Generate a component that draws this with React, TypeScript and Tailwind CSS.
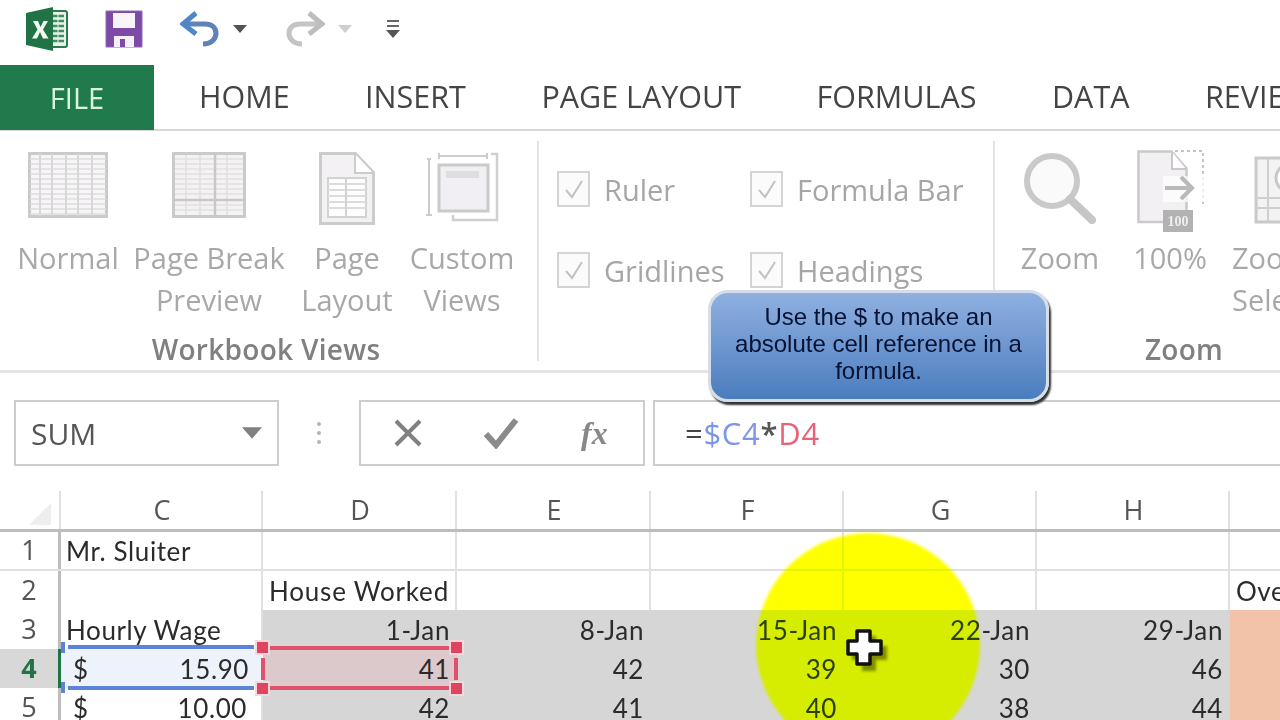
import React from "react";

const ui = "font-['Open_Sans',sans-serif]";
const cellFont = "font-['Lato',sans-serif]";

function ExcelLogo() {
  return (
    <svg width="44" height="44" viewBox="0 0 44 44">
      <rect x="24" y="4" width="18" height="36" rx="2" fill="#e8f2ea" stroke="#2a7a4c" strokeWidth="2" />
      {[9, 14, 19, 24, 29, 34].map((y) => (
        <path key={y} d={`M27 ${y}h12`} stroke="#3f8c60" strokeWidth="2.5" />
      ))}
      <path d="M33 6v32" stroke="#e8f2ea" strokeWidth="1" />
      <path d="M0 6 27 0v44L0 38z" fill="#217346" transform="translate(1 0)" />
      <path d="M8 14h5l2.500 6 3-6h4.500l-5 8.500 5.500 9H18l-3-6.500-3 6.500H7l5.500-9z" fill="#f1f8f3" />
    </svg>
  );
}

function SaveIcon() {
  return (
    <svg width="38" height="38" viewBox="0 0 38 38">
      <path d="M1 1h36v36H1z" fill="#7d4aa6" stroke="#8f68b7" />
      <rect x="8" y="3" width="22" height="15" fill="#f7f4fa" />
      <rect x="9" y="26" width="20" height="11" fill="#f4eff8" />
      <rect x="15" y="29" width="5" height="8" fill="#7d4aa6" />
    </svg>
  );
}

function UndoIcon({ color, arrow }: { color: string; arrow: string }) {
  return (
    <svg width="40" height="36" viewBox="0 0 40 36">
      <path d="M5 13h20c7 0 11 4 11 9.500S31 33 23 33" fill="none" stroke={color} strokeWidth="5" />
      <path d="M16 2 3 13l13 10" fill="none" stroke={arrow} strokeWidth="5" />
    </svg>
  );
}

function Caret({ color = "#555", w = 14, h = 8 }: { color?: string; w?: number; h?: number }) {
  return (
    <svg width={w} height={h} viewBox="0 0 14 8" className="shrink-0">
      <path d="M0 0h14L7 8z" fill={color} />
    </svg>
  );
}

function NormalIcon() {
  const xs = [12, 24, 38, 50, 64];
  const ys = [5, 10, 15, 20, 25, 30, 35, 40, 45, 50, 55, 60];
  return (
    <svg width="80" height="66" viewBox="0 0 80 66">
      <rect x="1.500" y="1.500" width="77" height="63" fill="#f7f5f7" stroke="#cacaca" strokeWidth="3" />
      {ys.map((y) => (
        <path key={y} d={`M2 ${y + 2}h76`} stroke="#dcdcdc" strokeWidth="1.500" />
      ))}
      {xs.map((x) => (
        <path key={x} d={`M${x} 2v62`} stroke="#d8d8d8" strokeWidth="2" />
      ))}
    </svg>
  );
}

function BreakIcon() {
  const ys = [7, 12, 17, 22, 27, 32, 37, 42, 53, 58];
  return (
    <svg width="74" height="66" viewBox="0 0 74 66">
      <rect x="1.500" y="1.500" width="71" height="63" fill="#f5f2f4" stroke="#cacaca" strokeWidth="3" />
      {ys.map((y) => (
        <path key={y} d={`M3 ${y}h68`} stroke="#e2dfe2" strokeWidth="1.500" />
      ))}
      {[14, 28, 55].map((x) => (
        <path key={x} d={`M${x} 3v60`} stroke="#e0e0e0" strokeWidth="1.500" />
      ))}
      <path d="M43 2v62M2 48h70" stroke="#c8c8c8" strokeWidth="2.500" />
    </svg>
  );
}

function PageIcon() {
  return (
    <svg width="56" height="74" viewBox="0 0 56 74">
      <path d="M1.500 1.500h35l18 19v51h-53z" fill="#f3f1f3" stroke="#cccccc" strokeWidth="3" />
      <path d="M36 2v19h18" fill="#fff" stroke="#cccccc" strokeWidth="2" />
      <rect x="9" y="26" width="38" height="39" fill="#fdfdfd" stroke="#d2d2d2" strokeWidth="2" />
      {[32, 38, 44, 50, 56].map((y) => (
        <path key={y} d={`M9 ${y}h38`} stroke="#dcdcdc" strokeWidth="2" />
      ))}
      <path d="M27 26v39" stroke="#d2d2d2" strokeWidth="2" />
    </svg>
  );
}

function CustomIcon() {
  return (
    <svg width="74" height="70" viewBox="0 0 74 70">
      <path d="M14 4h48M14 1v6M62 1v6" stroke="#cccccc" strokeWidth="2" fill="none" />
      <path d="M2 12h4M4 12v56M1 68h6" stroke="#cccccc" strokeWidth="2" fill="none" transform="translate(0 -5)" />
      <path d="M66 2h6v66H28v-5" stroke="#d0d0d0" strokeWidth="2.500" fill="none" />
      <rect x="14" y="13" width="49" height="46" fill="#f1eff4" stroke="#cacaca" strokeWidth="3" />
      <rect x="21" y="19" width="33" height="7" fill="#dedede" />
    </svg>
  );
}

function ZoomGlass() {
  return (
    <svg width="74" height="72" viewBox="0 0 74 72">
      <circle cx="29" cy="29" r="25" fill="#fafafa" stroke="#c9c9c9" strokeWidth="6" />
      <path d="M47 47 69 68" stroke="#c6c6c6" strokeWidth="8" strokeLinecap="round" />
    </svg>
  );
}

function HundredIcon() {
  return (
    <svg className="ml-[4px] -mt-[2px]" width="70" height="82" viewBox="0 0 70 82">
      <path d="M1.500 1.500h33l15 17V72h-48z" fill="#f2f0f3" stroke="#c9c9c9" strokeWidth="2.500" />
      <path d="M35 2v17h14" fill="#fff" stroke="#c9c9c9" strokeWidth="2" />
      <path d="M38 1h28v56" fill="none" stroke="#c4c4c4" strokeWidth="2" strokeDasharray="3 3" />
      <rect x="26" y="26" width="42" height="26" fill="#fff" opacity=".7" />
      <path d="M28 38h26M44 27l11 11-11 11" fill="none" stroke="#b9b9b9" strokeWidth="4" />
      <rect x="26" y="60" width="30" height="22" fill="#b2b2b2" />
      <text x="41" y="76" fontSize="14" fontWeight="700" textAnchor="middle" fill="#eee" fontFamily="Liberation Serif, serif">100</text>
    </svg>
  );
}

function SelectionIcon() {
  return (
    <svg width="40" height="72" viewBox="0 0 40 72">
      <rect x="2" y="6" width="38" height="64" fill="#f3f3f3" stroke="#c9c9c9" strokeWidth="3" />
      <path d="M2 46h38M2 56h38M14 6v64" stroke="#cfcfcf" strokeWidth="2" />
      <circle cx="36" cy="26" r="14" fill="#fff" stroke="#c9c9c9" strokeWidth="3" />
    </svg>
  );
}

function RibbonButton({ w, icon, lines }: { w: string; icon: React.ReactNode; lines: string[] }) {
  return (
    <div className={`${w} flex flex-col items-center shrink-0`}>
      <div className="h-[85px] flex items-start justify-center">{icon}</div>
      {lines.map((l) => (
        <div key={l} className="h-[42px] leading-[42px] text-[29px] text-[#a8a8a8] whitespace-nowrap">
          {l}
        </div>
      ))}
    </div>
  );
}

function Check({ label, w }: { label: string; w: string }) {
  return (
    <div className={`${w} flex items-center gap-[14px] h-[38px] shrink-0`}>
      <div className="w-[33px] h-[36px] border-2 border-[#d4d4d4] bg-[#fbfbfb] flex items-center justify-center shrink-0">
        <svg width="22" height="22" viewBox="0 0 22 22">
          <path d="M3 12l6 7L19 3" fill="none" stroke="#c2c2c2" strokeWidth="2" />
        </svg>
      </div>
      <span className="text-[29px] leading-none text-[#a6a6a6] whitespace-nowrap">{label}</span>
    </div>
  );
}

const columns = [
  { k: "C", w: "w-[202px]" },
  { k: "D", w: "w-[194px]" },
  { k: "E", w: "w-[194px]" },
  { k: "F", w: "w-[193px]" },
  { k: "G", w: "w-[193px]" },
  { k: "H", w: "w-[193px]" },
  { k: "I", w: "w-[60px]" },
];

function Cell({ w, children, right, bg = "", extra = "" }: { w: string; children?: React.ReactNode; right?: boolean; bg?: string; extra?: string }) {
  return (
    <div
      className={`${w} ${bg} ${extra} shrink-0 h-full relative flex items-center px-[6px] pt-[2px] text-[26px] text-[#2b2b2b] whitespace-nowrap ${cellFont} tracking-[0.6px] ${right ? "justify-end" : ""}`}
    >
      {children}
    </div>
  );
}

function RowHead({ n, active }: { n: number; active?: boolean }) {
  return (
    <div
      className={`w-[61px] shrink-0 h-full flex items-center justify-center text-[27px] ${ui} border-r-[3px] ${
        active ? "bg-[#d8d8d8] text-[#217346] font-bold border-[#217346]" : "text-[#555] border-[#bdbdbd]"
      }`}
    >
      <span className="pl-[3px] pr-[3px]">{n}</span>
    </div>
  );
}

function Row({ n, active, cells, plain }: { n: number; active?: boolean; cells: React.ReactNode; plain?: boolean }) {
  return (
    <div className={`flex h-[39px] ${plain ? "border-b-2 border-[#e0e0e0]" : ""}`}>
      <RowHead n={n} active={active} />
      {cells}
    </div>
  );
}

const grayBg = "bg-[#d6d6d6]";
const orange = "bg-[#f2c3a8]";
const vline = "border-r-2 border-[#e0e0e0]";

function Handle({ cls }: { cls: string }) {
  return <span className={`absolute w-[15px] h-[15px] bg-[#e0455f] border-2 border-[#f8d8dc] ${cls}`} />;
}

export default function App() {
  return (
    <div className={`relative w-[1280px] h-[720px] overflow-hidden bg-white ${ui} blur-[0.7px]`}>
      {/* Quick access toolbar */}
      <div className="h-[65px] flex items-center pl-[25px] pb-[7px]">
        <div className="w-[80px] shrink-0"><ExcelLogo /></div>
        <SaveIcon />
        <div className="ml-[37px] flex items-center">
          <UndoIcon color="#5f83b8" arrow="#4f86c6" />
          <div className="ml-[13px]"><Caret /></div>
        </div>
        <div className="ml-[38px] flex items-center">
          <div className="-scale-x-100"><UndoIcon color="#c4c4c4" arrow="#bdbdbd" /></div>
          <div className="ml-[13px]"><Caret color="#cfcfcf" /></div>
        </div>
        <div className="ml-[34px] flex flex-col items-center gap-[3px] w-[14px]">
          <div className="w-[12px] h-[2px] bg-[#666]" />
          <div className="w-[12px] h-[2px] bg-[#666]" />
          <Caret color="#555" w={14} h={8} />
        </div>
      </div>

      {/* Tabs */}
      <div className="h-[66px] flex items-stretch border-b-2 border-[#d8d8d8] text-[30.500px] text-[#444] whitespace-nowrap">
        <div className="w-[154px] h-[65px] bg-[#217a4b] text-[#d8f5dc] flex items-center justify-center shrink-0 text-[29px]">FILE</div>
        <div className="flex items-center pl-[45px] gap-[75.500px]">
          <span>HOME</span>
          <span>INSERT</span>
          <span>PAGE LAYOUT</span>
          <span>FORMULAS</span>
          <span>DATA</span>
          <span>REVIEW</span>
        </div>
      </div>

      {/* Ribbon */}
      <div className="h-[242px] flex border-b-[3px] border-[#e4e4e4] overflow-hidden">
        <div className="w-[537px] shrink-0 flex flex-col pt-[21px] pl-[8px]">
          <div className="flex h-[183px]">
            <RibbonButton w="w-[120px]" icon={<NormalIcon />} lines={["Normal"]} />
            <RibbonButton w="w-[162px]" icon={<BreakIcon />} lines={["Page Break", "Preview"]} />
            <RibbonButton w="w-[114px]" icon={<PageIcon />} lines={["Page", "Layout"]} />
            <RibbonButton w="w-[116px]" icon={<CustomIcon />} lines={["Custom", "Views"]} />
          </div>
          <div className="w-[516px] text-center text-[28px] tracking-[0.3px] font-semibold text-[#808080] leading-none">Workbook Views</div>
        </div>
        <div className="w-[2px] h-[220px] mt-[10px] bg-[#e4e4e4] shrink-0" />
        <div className="w-[454px] shrink-0 pl-[18px] pt-[39px] flex flex-col gap-[43px]">
          <div className="flex">
            <Check label="Ruler" w="w-[193px]" />
            <Check label="Formula Bar" w="w-[240px]" />
          </div>
          <div className="flex">
            <Check label="Gridlines" w="w-[193px]" />
            <Check label="Headings" w="w-[240px]" />
          </div>
        </div>
        <div className="w-[2px] h-[220px] mt-[10px] bg-[#e4e4e4] shrink-0" />
        <div className="flex-1 flex flex-col pt-[21px] pl-[15px] overflow-hidden">
          <div className="flex h-[183px]">
            <RibbonButton w="w-[100px]" icon={<ZoomGlass />} lines={["Zoom"]} />
            <RibbonButton w="w-[120px]" icon={<HundredIcon />} lines={["100%"]} />
            <div className="pl-[2px] flex flex-col whitespace-nowrap">
              <div className="h-[85px] pl-[22px]"><SelectionIcon /></div>
              <div className="h-[42px] leading-[42px] text-[29px] text-[#a8a8a8]">Zoom to</div>
              <div className="h-[42px] leading-[42px] text-[29px] text-[#a8a8a8]">Selection</div>
            </div>
          </div>
          <div className="w-[348px] text-center text-[28px] tracking-[0.3px] font-semibold text-[#808080] leading-none">Zoom</div>
        </div>
      </div>

      {/* Formula bar */}
      <div className="h-[118px] pt-[27px] flex pl-[14px] items-start">
        <div className="w-[265px] h-[66px] border-2 border-[#cdcdcd] flex items-center justify-between pl-[15px] pr-[15px] text-[30px] text-[#555] shrink-0">
          <span>SUM</span>
          <Caret color="#808080" w={20} h={12} />
        </div>
        <div className="w-[80px] h-[66px] flex flex-col items-center justify-center gap-[5px] shrink-0">
          {[0, 1, 2].map((i) => (
            <span key={i} className="w-[4px] h-[4px] rounded-full bg-[#b4b4b4]" />
          ))}
        </div>
        <div className="w-[286px] h-[66px] border-2 border-[#cdcdcd] flex items-center pl-[32px] shrink-0">
          <svg width="30" height="28" viewBox="0 0 30 28"><path d="M3 2l24 24M27 2 3 26" stroke="#808080" strokeWidth="4" /></svg>
          <svg className="ml-[60px]" width="36" height="32" viewBox="0 0 36 32"><path d="M3 17l10 11L33 3" fill="none" stroke="#8a8a8a" strokeWidth="6" /></svg>
          <span className="ml-[62px] font-['Liberation_Serif',serif] italic font-bold text-[32px] text-[#888] leading-none">fx</span>
        </div>
        <div className="ml-[8px] flex-1 h-[66px] border-2 border-r-0 border-[#cdcdcd] flex items-center pl-[30px] text-[31px] tracking-[0.7px] whitespace-nowrap">
          <span className="text-[#444]">=</span>
          <span className="text-[#7d97e6]">$C4</span>
          <span className="text-[#555] font-semibold">*</span>
          <span className="text-[#e8627a]">D4</span>
        </div>
      </div>

      {/* Column headers */}
      <div className="flex h-[41px] border-b-[3px] border-[#bdbdbd] text-[27px] text-[#555]">
        <div className="w-[61px] shrink-0 relative border-r-2 border-[#e0e0e0] flex items-end justify-end pr-[8px] pb-[4px]">
          <svg width="22" height="22" viewBox="0 0 22 22"><path d="M22 0v22H0z" fill="#eeeeee" /></svg>
        </div>
        {columns.map((c) => (
          <div key={c.k} className={`${c.w} shrink-0 flex items-center justify-center pl-[2px] ${vline}`}>
            {c.k === "I" ? "" : c.k}
          </div>
        ))}
      </div>

      {/* Rows */}
      <div className="flex flex-col">
        <Row
          n={1}
          plain
          cells={
            <>
              <Cell w="w-[202px]" extra={vline}><span className="-ml-[1px]">Mr. Sluiter</span></Cell>
              {columns.slice(1).map((c) => <Cell key={c.k} w={c.w} extra={vline} />)}
            </>
          }
        />
        <Row
          n={2}
          cells={
            <>
              <Cell w="w-[202px]" extra={vline} />
              <Cell w="w-[194px]" extra={vline}><span className="tracking-[0.8px]">House Worked</span></Cell>
              {columns.slice(2, 6).map((c) => <Cell key={c.k} w={c.w} extra={vline} />)}
              <Cell w="w-[60px]">Overtime</Cell>
            </>
          }
        />
        <Row
          n={3}
          cells={
            <>
              <Cell w="w-[202px]" extra={vline}><span className="-ml-[1px]">Hourly Wage</span></Cell>
              <Cell w="w-[194px]" bg={grayBg} extra="!pr-[7px]" right>1-Jan</Cell>
              <Cell w="w-[194px]" bg={grayBg} extra="!pr-[7px]" right>8-Jan</Cell>
              <Cell w="w-[193px]" bg={grayBg} extra="!pr-[7px]" right>15-Jan</Cell>
              <Cell w="w-[193px]" bg={grayBg} extra="!pr-[7px]" right>22-Jan</Cell>
              <Cell w="w-[193px]" bg={grayBg} extra="!pr-[7px]" right>29-Jan</Cell>
              <Cell w="w-[60px]" bg={orange} />
            </>
          }
        />
        <Row
          n={4}
          active
          cells={
            <>
              <Cell w="w-[202px]" bg="bg-[#eef2fb]" extra="justify-between !pl-[12px] !pr-[14px]">
                <span>$</span><span>15.90</span>
                <span className="absolute left-[7px] right-[9px] top-[-4px] h-[4px] bg-[#5b83d8]" />
                <span className="absolute left-[7px] right-[9px] bottom-[-2px] h-[4px] bg-[#5b83d8]" />
                <span className="absolute left-0 top-[-7px] w-[4px] h-[11px] bg-[#5b83d8]" />
                <span className="absolute left-0 bottom-[-5px] w-[4px] h-[11px] bg-[#5b83d8]" />
              </Cell>
              <Cell w="w-[194px]" bg="bg-[#dcc9cb]" extra="z-10 !pr-[7px]" right>
                41
                <span className="absolute left-0 right-0 top-[-3px] h-[4px] bg-[#e0526b]" />
                <span className="absolute left-0 right-0 bottom-[-2px] h-[4px] bg-[#e0526b]" />
                <span className="absolute left-[-2px] top-[9px] h-[22px] w-[4px] bg-[#e0526b]" />
                <span className="absolute right-[-1px] top-[9px] h-[22px] w-[4px] bg-[#e0526b]" />
                <Handle cls="left-[-8px] top-[-9px]" />
                <Handle cls="right-[-7px] top-[-9px]" />
                <Handle cls="left-[-8px] bottom-[-8px]" />
                <Handle cls="right-[-7px] bottom-[-8px]" />
              </Cell>
              <Cell w="w-[194px]" bg={grayBg} extra="!pr-[7px]" right>42</Cell>
              <Cell w="w-[193px]" bg={grayBg} extra="!pr-[7px]" right>39</Cell>
              <Cell w="w-[193px]" bg={grayBg} extra="!pr-[7px]" right>30</Cell>
              <Cell w="w-[193px]" bg={grayBg} extra="!pr-[7px]" right>46</Cell>
              <Cell w="w-[60px]" bg={orange} />
            </>
          }
        />
        <Row
          n={5}
          cells={
            <>
              <Cell w="w-[202px]" extra={`justify-between !pl-[12px] !pr-[14px] ${vline}`}>
                <span>$</span><span>10.00</span>
              </Cell>
              <Cell w="w-[194px]" bg={grayBg} extra="!pr-[7px]" right>42</Cell>
              <Cell w="w-[194px]" bg={grayBg} extra="!pr-[7px]" right>41</Cell>
              <Cell w="w-[193px]" bg={grayBg} extra="!pr-[7px]" right>40</Cell>
              <Cell w="w-[193px]" bg={grayBg} extra="!pr-[7px]" right>38</Cell>
              <Cell w="w-[193px]" bg={grayBg} extra="!pr-[7px]" right>44</Cell>
              <Cell w="w-[60px]" bg={orange} />
            </>
          }
        />
      </div>

      {/* Callout */}
      <div className="absolute left-[708px] top-[290px] w-[341px] h-[112px] rounded-[20px] border-[3px] border-[#d4dde8] bg-gradient-to-b from-[#8fb0e0] via-[#6e97d0] to-[#4a7cbc] shadow-[2px_3px_2px_#333] flex items-center justify-center text-center font-['Liberation_Sans',sans-serif] text-[24px] leading-[27px] text-[#061233] px-[16px] pb-[6px]">
        Use the $ to make an absolute cell reference in a formula.
      </div>

      {/* Cursor spotlight */}
      <div className="absolute left-[756px] top-[533px] w-[224px] h-[224px] rounded-full bg-[#ffff00] mix-blend-multiply blur-[1.5px]" />
      <div className="absolute left-[756px] top-[533px] w-[224px] h-[224px] rounded-full bg-[#001600] mix-blend-plus-lighter blur-[1.5px]" />
      <svg className="absolute left-[845px] top-[628px]" width="46" height="46" viewBox="0 0 46 46">
        <path d="M14 5h14v10h11v14H28v11H14V29H4V15h10z" fill="#000" opacity=".4" transform="translate(3 3)" className="blur-[1.5px]" />
        <path d="M12 3h13v10h11v13H25v10H12V26H3V13h9z" fill="#fff" stroke="#111" strokeWidth="3.500" strokeLinejoin="round" />
      </svg>
    </div>
  );
}
